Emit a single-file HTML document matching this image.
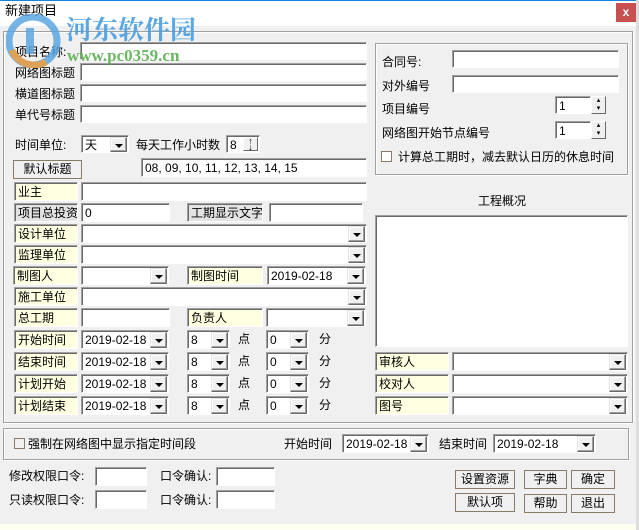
<!DOCTYPE html>
<html><head><meta charset="utf-8"><style>
*{box-sizing:border-box;margin:0;padding:0}
body{width:639px;height:530px;overflow:hidden;background:#f0f0f0;font-family:"Liberation Sans","Noto Sans CJK SC",sans-serif;font-size:12px;color:#000;position:relative}
.a{position:absolute}
.t{position:absolute;white-space:nowrap;line-height:14px;font-size:12px}
.in{position:absolute;background:#fff;border:1px solid #fff;border-top-color:#a0a0a0;border-left-color:#a0a0a0;box-shadow:inset 1px 1px 0 #696969;padding:2px 0 0 3px;line-height:14px;font-size:12px;white-space:nowrap;overflow:hidden}
.lb{position:absolute;background:#ffffe1;border:1px solid #fff;border-top-color:#a0a0a0;border-left-color:#a0a0a0;box-shadow:inset 1px 1px 0 #696969;padding:2px 0 0 3px;line-height:14px;font-size:12px;white-space:nowrap;overflow:hidden}
.lb.g{background:#e3e3e3}
.ar{position:absolute;right:1px;top:1px;bottom:0px;width:17px;background:#f0f0f0;border:1px solid #e3e3e3;border-right-color:#696969;border-bottom-color:#696969;box-shadow:inset -1px -1px 0 #a0a0a0,inset 1px 1px 0 #fff}
.ar:after{content:"";position:absolute;left:4px;top:6px;border-left:4px solid transparent;border-right:4px solid transparent;border-top:4px solid #000}
.btn{position:absolute;background:#f0f0f0;border:1px solid #8c7a68;text-align:center;line-height:17px;font-size:12px}
.box{position:absolute;border:1px solid #a0a0a0;box-shadow:1px 1px 0 #fff, inset 1px 1px 0 #fff}
.cb{position:absolute;width:11px;height:11px;background:#fff;border:1px solid #8a7a6a}
.sp{position:absolute;width:15px;background:#f0f0f0;border:1px solid #fff;border-right-color:#696969;border-bottom-color:#696969}
</style></head><body>
<div class="a" style="left:0;top:0;width:639px;height:26px;background:#fff"></div>
<div class="a" style="left:0;top:0;width:639px;height:1px;background:#1883d7"></div>
<div class="t" style="left:5px;top:4px;font-size:13px">新建项目</div>
<div class="a" style="left:616px;top:3px;width:20px;height:19px;background:#c75050;color:#fff;text-align:center;font-size:12px;line-height:18px;font-weight:bold">x</div>
<div class="a" style="left:636px;top:0;width:3px;height:530px;background:#ddd"></div>

<div class="box" style="left:3px;top:31px;width:630px;height:392px"></div>

<div class="t" style="left:15px;top:45px">项目名称:</div>
<div class="in" style="left:80px;top:42px;width:287px;height:18px"></div>
<div class="t" style="left:15px;top:66px">网络图标题</div>
<div class="in" style="left:80px;top:63px;width:287px;height:18px"></div>
<div class="t" style="left:15px;top:87px">横道图标题</div>
<div class="in" style="left:80px;top:84px;width:287px;height:18px"></div>
<div class="t" style="left:15px;top:108px">单代号标题</div>
<div class="in" style="left:80px;top:105px;width:287px;height:18px"></div>

<div class="t" style="left:15px;top:138px">时间单位:</div>
<div class="in" style="left:81px;top:135px;width:48px;height:18px">天<div class="ar"></div></div>
<div class="t" style="left:136px;top:138px">每天工作小时数</div>
<div class="in" style="left:226px;top:135px;width:34px;height:18px">8<div class="sp" style="right:1px;top:1px;height:14px;font-size:9px;line-height:6px;text-align:center">↑<br>↓</div></div>
<div class="btn" style="left:13px;top:160px;width:69px;height:19px">默认标题</div>
<div class="in" style="left:141px;top:158px;width:226px;height:19px">08, 09, 10, 11, 12, 13, 14, 15</div>

<div class="lb" style="left:14px;top:182px;width:64px;height:19px">业主</div>
<div class="in" style="left:81px;top:182px;width:286px;height:19px"></div>
<div class="lb g" style="left:14px;top:203px;width:64px;height:19px">项目总投资</div>
<div class="in" style="left:81px;top:203px;width:89px;height:19px">0</div>
<div class="lb g" style="left:187px;top:203px;width:76px;height:19px">工期显示文字</div>
<div class="in" style="left:269px;top:203px;width:94px;height:19px"></div>
<div class="lb" style="left:14px;top:224px;width:64px;height:19px">设计单位</div>
<div class="in" style="left:81px;top:224px;width:286px;height:19px"><div class="ar"></div></div>
<div class="lb" style="left:14px;top:245px;width:64px;height:19px">监理单位</div>
<div class="in" style="left:81px;top:245px;width:286px;height:19px"><div class="ar"></div></div>
<div class="lb" style="left:13px;top:266px;width:65px;height:19px">制图人</div>
<div class="in" style="left:81px;top:266px;width:88px;height:19px"><div class="ar"></div></div>
<div class="lb" style="left:187px;top:266px;width:76px;height:19px">制图时间</div>
<div class="in" style="left:267px;top:266px;width:99px;height:19px">2019-02-18<div class="ar"></div></div>
<div class="lb" style="left:14px;top:287px;width:64px;height:19px">施工单位</div>
<div class="in" style="left:81px;top:287px;width:286px;height:19px"><div class="ar"></div></div>
<div class="lb" style="left:14px;top:308px;width:64px;height:19px">总工期</div>
<div class="in" style="left:81px;top:308px;width:89px;height:19px"></div>
<div class="lb" style="left:187px;top:308px;width:76px;height:19px">负责人</div>
<div class="in" style="left:266px;top:308px;width:100px;height:19px"><div class="ar"></div></div>

<div class="lb" style="left:14px;top:330px;width:64px;height:19px">开始时间</div>
<div class="in" style="left:81px;top:330px;width:88px;height:19px">2019-02-18<div class="ar"></div></div>
<div class="in" style="left:187px;top:330px;width:43px;height:19px">8<div class="ar"></div></div>
<div class="t" style="left:238px;top:332px">点</div>
<div class="in" style="left:266px;top:330px;width:43px;height:19px">0<div class="ar"></div></div>
<div class="t" style="left:319px;top:332px">分</div>

<div class="lb" style="left:14px;top:352px;width:64px;height:19px">结束时间</div>
<div class="in" style="left:81px;top:352px;width:88px;height:19px">2019-02-18<div class="ar"></div></div>
<div class="in" style="left:187px;top:352px;width:43px;height:19px">8<div class="ar"></div></div>
<div class="t" style="left:238px;top:354px">点</div>
<div class="in" style="left:266px;top:352px;width:43px;height:19px">0<div class="ar"></div></div>
<div class="t" style="left:319px;top:354px">分</div>

<div class="lb" style="left:14px;top:374px;width:64px;height:19px">计划开始</div>
<div class="in" style="left:81px;top:374px;width:88px;height:19px">2019-02-18<div class="ar"></div></div>
<div class="in" style="left:187px;top:374px;width:43px;height:19px">8<div class="ar"></div></div>
<div class="t" style="left:238px;top:376px">点</div>
<div class="in" style="left:266px;top:374px;width:43px;height:19px">0<div class="ar"></div></div>
<div class="t" style="left:319px;top:376px">分</div>

<div class="lb" style="left:14px;top:396px;width:64px;height:19px">计划结束</div>
<div class="in" style="left:81px;top:396px;width:88px;height:19px">2019-02-18<div class="ar"></div></div>
<div class="in" style="left:187px;top:396px;width:43px;height:19px">8<div class="ar"></div></div>
<div class="t" style="left:238px;top:398px">点</div>
<div class="in" style="left:266px;top:396px;width:43px;height:19px">0<div class="ar"></div></div>
<div class="t" style="left:319px;top:398px">分</div>

<div class="box" style="left:375px;top:43px;width:253px;height:132px"></div>
<div class="t" style="left:382px;top:55px">合同号:</div>
<div class="in" style="left:452px;top:50px;width:167px;height:18px"></div>
<div class="t" style="left:382px;top:79px">对外编号</div>
<div class="in" style="left:452px;top:75px;width:167px;height:18px"></div>
<div class="t" style="left:382px;top:102px">项目编号</div>
<div class="in" style="left:555px;top:96px;width:36px;height:18px">1</div>
<div class="sp" style="left:591px;top:96px;height:18px;font-size:7px;line-height:8px;text-align:center">▴<br>▾</div>
<div class="t" style="left:382px;top:126px">网络图开始节点编号</div>
<div class="in" style="left:555px;top:121px;width:36px;height:18px">1</div>
<div class="sp" style="left:591px;top:121px;height:18px;font-size:7px;line-height:8px;text-align:center">▴<br>▾</div>
<div class="cb" style="left:381px;top:151px"></div>
<div class="t" style="left:398px;top:150px">计算总工期时，减去默认日历的休息时间</div>

<div class="t" style="left:478px;top:194px">工程概况</div>
<div class="in" style="left:375px;top:215px;width:253px;height:132px"></div>

<div class="lb" style="left:375px;top:352px;width:74px;height:19px">审核人</div>
<div class="in" style="left:452px;top:352px;width:176px;height:19px"><div class="ar"></div></div>
<div class="lb" style="left:375px;top:374px;width:74px;height:19px">校对人</div>
<div class="in" style="left:452px;top:374px;width:176px;height:19px"><div class="ar"></div></div>
<div class="lb" style="left:375px;top:396px;width:74px;height:19px">图号</div>
<div class="in" style="left:452px;top:396px;width:176px;height:19px"><div class="ar"></div></div>

<div class="box" style="left:3px;top:428px;width:626px;height:32px"></div>
<div class="cb" style="left:14px;top:438px;background:transparent"></div>
<div class="t" style="left:28px;top:437px">强制在网络图中显示指定时间段</div>
<div class="t" style="left:284px;top:437px">开始时间</div>
<div class="in" style="left:342px;top:434px;width:87px;height:19px">2019-02-18<div class="ar"></div></div>
<div class="t" style="left:439px;top:437px">结束时间</div>
<div class="in" style="left:493px;top:434px;width:103px;height:19px">2019-02-18<div class="ar"></div></div>

<div class="t" style="left:9px;top:469px">修改权限口令:</div>
<div class="in" style="left:95px;top:467px;width:52px;height:19px"></div>
<div class="t" style="left:160px;top:469px">口令确认:</div>
<div class="in" style="left:216px;top:467px;width:59px;height:19px"></div>
<div class="t" style="left:9px;top:493px">只读权限口令:</div>
<div class="in" style="left:95px;top:490px;width:52px;height:19px"></div>
<div class="t" style="left:160px;top:493px">口令确认:</div>
<div class="in" style="left:216px;top:490px;width:59px;height:19px"></div>

<div class="btn" style="left:455px;top:470px;width:60px;height:19px">设置资源</div>
<div class="btn" style="left:524px;top:470px;width:43px;height:19px">字典</div>
<div class="btn" style="left:571px;top:470px;width:44px;height:19px">确定</div>
<div class="btn" style="left:455px;top:493px;width:60px;height:19px">默认项</div>
<div class="btn" style="left:524px;top:494px;width:43px;height:19px">帮助</div>
<div class="btn" style="left:571px;top:494px;width:44px;height:19px">退出</div>
<div class="a" style="left:0;top:524px;width:636px;height:6px;background:#fffff0"></div>

<svg class="a" style="left:6px;top:14px" width="58" height="54" viewBox="0 0 58 54">
<circle cx="27" cy="27" r="24" fill="none" stroke="#5aa6e0" stroke-width="7" opacity=".85"/>
<path d="M6 36 A24 24 0 0 0 40 48" fill="none" stroke="#f0a040" stroke-width="7" opacity=".85"/>
<rect x="20" y="14" width="8" height="26" fill="#5aa6e0" opacity=".85"/>
</svg>
<div class="t" style="left:66px;top:14px;font-size:26px;line-height:30px;color:#4a9ee0;font-weight:bold;font-family:'Noto Serif CJK SC',serif;opacity:.9">河东软件园</div>
<div class="t" style="left:67px;top:46px;font-size:17px;line-height:20px;color:#5cb050;font-weight:bold;font-family:'Liberation Serif',serif;opacity:.9">www.pc0359.cn</div>
</body></html>
